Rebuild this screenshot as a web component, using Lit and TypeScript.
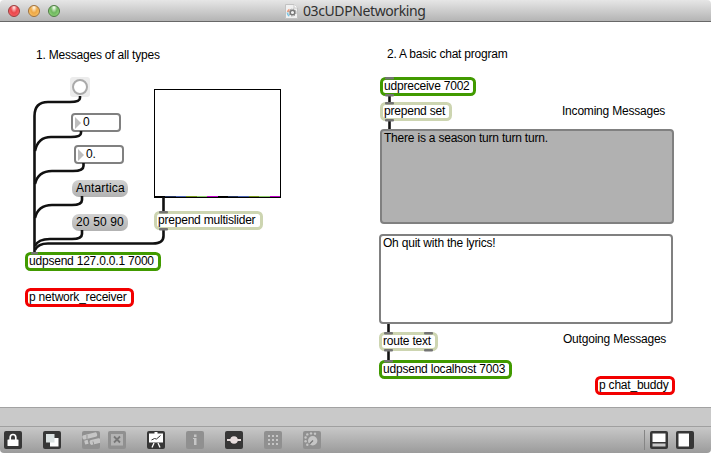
import { LitElement, html, css, svg } from "lit";
import { customElement } from "lit/decorators.js";
import { styleMap } from "lit/directives/style-map.js";

interface Node {
  kind: string;
  x: number;
  y: number;
  w: number;
  h: number;
  text: string;
}

const nodes: Node[] = [
  { kind: "comment", x: 36, y: 47, w: 140, h: 17, text: "1. Messages of all types" },
  { kind: "comment", x: 387, y: 46, w: 140, h: 17, text: "2. A basic chat program" },
  { kind: "comment", x: 562, y: 103, w: 120, h: 17, text: "Incoming Messages" },
  { kind: "comment", x: 563, y: 331, w: 120, h: 17, text: "Outgoing Messages" },
  { kind: "number", x: 71, y: 113, w: 50, h: 19, text: "0" },
  { kind: "number", x: 74, y: 145, w: 50, h: 19, text: "0." },
  { kind: "message", x: 72, y: 180, w: 56, h: 17, text: "Antartica" },
  { kind: "message", x: 72, y: 214, w: 56, h: 17, text: "20 50 90" },
  { kind: "object plain", x: 154, y: 211, w: 109, h: 19, text: "prepend multislider" },
  { kind: "object net", x: 25, y: 252, w: 136, h: 19, text: "udpsend 127.0.0.1 7000" },
  { kind: "object sub", x: 25, y: 288, w: 109, h: 19, text: "p network_receiver" },
  { kind: "object net", x: 380, y: 77, w: 96, h: 19, text: "udpreceive 7002" },
  { kind: "object plain", x: 380, y: 102, w: 72, h: 19, text: "prepend set" },
  { kind: "editor filled", x: 380, y: 129, w: 294, h: 95, text: "There is a season turn turn turn." },
  { kind: "editor", x: 379, y: 234, w: 294, h: 90, text: "Oh quit with the lyrics!" },
  { kind: "object plain", x: 379, y: 332, w: 59, h: 19, text: "route text" },
  { kind: "object net", x: 379, y: 360, w: 133, h: 19, text: "udpsend localhost 7003" },
  { kind: "object sub", x: 595, y: 376, w: 80, h: 19, text: "p chat_buddy" },
];

const cords = [
  "M80 96V98Q80 102 70 102H48Q34.500 102 34.500 116V252",
  "M81 131V133Q81 137 71 137H51Q38 137 35 151",
  "M83.500 163V166Q83.500 171 73 171H52Q38 171 35 184",
  "M82 196V200Q82 205 72 205H52Q38 205 35 218",
  "M82 230V234Q82 239 72 239H50Q38 239 35 246",
  "M163.500 229V236Q163.500 243.500 153 243.500H48Q38 243.500 35 250",
  "M163.500 197V212",
  "M389.500 95V103",
  "M389.500 120V129",
  "M388.500 324V333",
  "M388.500 350V361",
];

const ports = [
  [159, 211], [159, 228], [31, 252, 7], [385, 77], [385, 94], [385, 102], [385, 119],
  [384, 332], [424, 332], [384, 349], [424, 349], [384, 360],
];

const sliderColors = ["#000", "#26365e", "#4a63b0", "#75951c", "#8fc96b", "#c000c8"];

const icons: Record<string, unknown> = {
  lock: svg`<path d="M6.200 9V6.500a2.800 3 0 0 1 5.600 0V9" fill="none" stroke="#fff" stroke-width="1.700"/><rect x="3.500" y="8.500" width="11" height="6.500" rx=".6" fill="#fff"/>`,
  layers: svg`<rect x="7" y="7" width="8.500" height="8.500" fill="#fff"/><rect x="3" y="3" width="8.500" height="8.500" fill="#dce3e3"/>`,
  scope: svg`<g transform="rotate(-14 9 8)"><rect x="1" y="2.500" width="15" height="4.500" rx="1.800"/><rect x="7" y="9" width="11" height="5" rx="1.800"/><path d="M2 8h3.500v4H2z"/></g><path d="M5 4v4M11 10.500l1 4" stroke="#959595"/>`,
  cross: svg`<rect x="3" y="3" width="12" height="11.500" fill="#b3b3b3"/><path d="M6 5.500l6 6M12 5.500l-6 6" stroke="#777" stroke-width="1.800"/>`,
  easel: svg`<path d="M2 2.500h14v9H2zM7.500 1h3v2h-3z" fill="#fff"/><path d="M7 12l-2 4.500M11 12l2 4.500" stroke="#fff" stroke-width="1.300"/><path d="M4.500 9l3-1.500 2 .5 4-3.500" fill="none" stroke="#333"/>`,
  info: svg`<rect x="8" y="3.500" width="2.500" height="2.500"/><path d="M7 7h3.500v7H8V8H7z"/>`,
  slider: svg`<path d="M2 8h14v2H2z" fill="#e7dddd"/><circle cx="9" cy="9" r="3.800" fill="#e7dddd"/>`,
  grid: svg`${[4, 8, 12].map((y) => [4, 8, 12].map((x) => svg`<rect x=${x} y=${y} width="2" height="2"/>`))}`,
  dial: svg`<circle cx="9.700" cy="9.700" r="4.700"/><path d="M10 9.500l-3.500 3.500" stroke="#777" stroke-width="1.300"/>${[[4.300, 3.400], [8, 2.400], [12, 2.700], [2.600, 6.500], [2.600, 10.300], [4.300, 13.800]].map((p) => svg`<circle cx=${p[0]} cy=${p[1]} r="1.200"/>`)}`,
  bottomPane: svg`<path d="M2.500 2.500h13V11h-13z" fill="#fff"/><path d="M2.500 12.500h13V15.500h-13z" fill="#c8c8c8"/>`,
  sidePane: svg`<path d="M2.500 2.500H13V15.500H2.500z" fill="#fff"/>`,
};

@customElement("tool-icon")
class ToolIcon extends LitElement {
  static properties = { name: {}, off: { type: Boolean } };
  declare name: string;
  declare off: boolean;
  static styles = css`
    :host { display: block; flex: none; width: 18px; height: 18px; }
    svg { display: block; }
    .bg { fill: #373737; }
    .bg.off { fill: #909090; }
    .glyph { fill: #c6c6c6; }
  `;
  render() {
    return html`<svg width="18" height="18" viewBox="0 0 18 18">
      <rect class="bg ${this.off ? "off" : ""}" width="18" height="18" rx="2"/>
      <g class="glyph">${icons[this.name]}</g>
    </svg>`;
  }
}

@customElement("app-root")
class AppRoot extends LitElement {
  static styles = css`
    :host {
      display: flex; flex-direction: column; width: 711px; height: 453px; overflow: hidden;
      background: #fff; color: #000;
      font: 12px/13px "Liberation Sans", Arial, sans-serif; letter-spacing: -.21px;
    }
    .title {
      box-sizing: border-box; flex: none; height: 22px; display: flex; align-items: center;
      padding-left: 8px; border-bottom: 1px solid #686868; border-radius: 4px 4px 0 0;
      background: linear-gradient(#e6e6e6, #b4b4b4);
    }
    .lights { display: flex; gap: 8px; width: 277px; }
    .light { box-sizing: border-box; width: 12px; height: 12px; border-radius: 50%; border: 1px solid; }
    .red { border-color: #9c3b3b; background: radial-gradient(ellipse at 50% 15%, #ffd9d9 5%, #e9474b 45%, #f4585c 70%, #ff9c9c); }
    .amber { border-color: #a0703a; background: radial-gradient(ellipse at 50% 15%, #fff3dc 5%, #eda745 45%, #f6b95b 70%, #ffe89c); }
    .green { border-color: #4d7c42; background: radial-gradient(ellipse at 50% 15%, #effbe9 5%, #6fb65f 45%, #84cb70 70%, #c6f6a4); }
    .name { margin-left: 5px; font: 14px/20px "Noto Sans", "Open Sans", sans-serif; letter-spacing: -.4px; color: #303030; white-space: nowrap; }
    .canvas { position: relative; flex: 1; margin-top: -22px; padding-top: 22px; }
    .wires { position: absolute; left: 0; top: 0; }
    .cord { fill: none; stroke: #111; stroke-width: 2.600; }
    .port { fill: #747474; }
    .node { position: absolute; box-sizing: border-box; white-space: nowrap; display: flex; align-items: center; }
    .object { border: 3px solid; border-radius: 5.500px; background: #fff; padding-left: 1px; }
    .plain { border-color: #cdd5b1; }
    .net { border-color: #419a00; }
    .sub { border-color: #f20000; }
    .number { border: 2px solid #808080; border-radius: 4px; background: #fff; gap: 2px; padding-left: 2px; }
    .number::before { content: ""; border: solid transparent; border-width: 6px 0 6px 6px; border-left-color: #bdbdbd; }
    .message { border-radius: 7px; padding-left: 4px; letter-spacing: .15px; background: linear-gradient(#d2d2d2, #b2b2b2); }
    .editor { border: 2px solid #808080; border-radius: 4px; align-items: flex-start; padding: 1px 2px; background: #fff; }
    .filled { background: #b1b1b1; }
    .bang { left: 70px; top: 77px; width: 20px; height: 20px; border-radius: 3px; background: #ececec; justify-content: center; }
    .ring { box-sizing: border-box; width: 16px; height: 16px; border: 2px solid #aaa; border-radius: 50%; background: #fff; }
    .multislider { left: 154px; top: 89px; width: 127px; height: 109px; border: 1px solid #000; align-items: flex-end; background: #fff; }
    .bar { flex: 1; height: 1px; }
    .strip { box-sizing: border-box; flex: none; height: 19px; border-top: 1px solid #a2a2a2; background: #c9c9c9; }
    .tools {
      box-sizing: border-box; flex: none; height: 27px; display: flex; align-items: center;
      padding: 0 17px 0 4px; border-top: 1px solid #a0a0a0; border-radius: 0 0 4px 4px;
      background: linear-gradient(#c8c8c8, #9b9b9b);
    }
    .set { display: flex; gap: 21px; }
    .pair { display: flex; gap: 8px; }
    .panes { margin-left: auto; padding-left: 5px; border-left: 1px solid #858585; height: 20px; align-items: center; }
  `;

  box(n: Node) {
    const pos = { left: `${n.x}px`, top: `${n.y}px`, width: `${n.w}px`, height: `${n.h}px` };
    return html`<div class="node ${n.kind}" style=${styleMap(pos)}><span>${n.text}</span></div>`;
  }

  render() {
    return html`
      <div class="title">
        <div class="lights"><i class="light red"></i><i class="light amber"></i><i class="light green"></i></div>
        <svg width="13" height="16" viewBox="0 0 13 16">
          <path d="M.5 1.500H9L12.500 5V15.500H.5z" fill="#f1f1f1" stroke="#c2c2c2"/>
          <path d="M9 1.500V5h3.500" fill="#fff" stroke="#c8c8c8"/>
          <path d="M2.500 9a4.500 4.500 0 0 1 2-2.500" fill="none" stroke="#ee9a7a" stroke-width="1.500"/>
          <path d="M2.300 9.500a4 4 0 0 0 2 3.500" fill="none" stroke="#7cc6e4" stroke-width="1.500"/>
          <circle cx="7.500" cy="9.500" r="2.300" fill="none" stroke="#777" stroke-width="1.500"/>
          <circle cx="7.500" cy="9.500" r="3.500" fill="none" stroke="#888" stroke-dasharray="1.370 1.370"/>
        </svg>
        <span class="name">03cUDPNetworking</span>
      </div>
      <div class="canvas">
        ${nodes.map((n) => this.box(n))}
        <div class="node bang"><i class="ring"></i></div>
        <div class="node multislider">
          ${[...sliderColors, ...sliderColors].map((c) => html`<i class="bar" style=${styleMap({ background: c })}></i>`)}
        </div>
        <svg class="wires" width="711" height="407">
          ${cords.map((d) => svg`<path class="cord" d=${d}/>`)}
          ${ports.map(([x, y, w = 9]) => svg`<rect class="port" x=${x} y=${y} width=${w} height="2.500" rx="1"/>`)}
        </svg>
      </div>
      <div class="strip"></div>
      <div class="tools">
        <div class="set">
          <tool-icon name="lock"></tool-icon>
          <tool-icon name="layers"></tool-icon>
          <div class="pair"><tool-icon name="scope" off></tool-icon><tool-icon name="cross" off></tool-icon></div>
          <tool-icon name="easel"></tool-icon>
          <tool-icon name="info" off></tool-icon>
          <tool-icon name="slider"></tool-icon>
          <tool-icon name="grid" off></tool-icon>
          <tool-icon name="dial" off></tool-icon>
        </div>
        <div class="pair panes"><tool-icon name="bottomPane"></tool-icon><tool-icon name="sidePane"></tool-icon></div>
      </div>
    `;
  }
}
